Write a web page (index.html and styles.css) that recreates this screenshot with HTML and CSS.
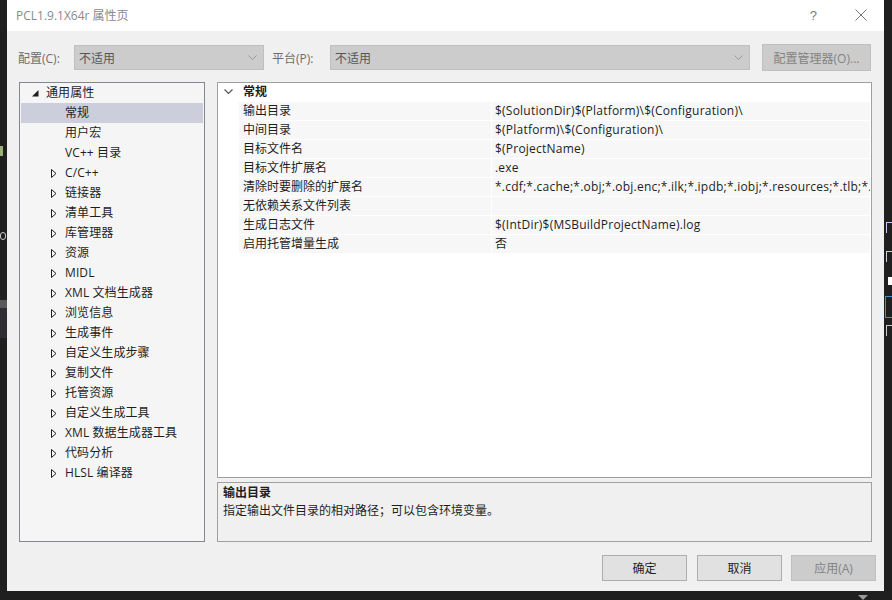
FILE: index.html
```html
<!DOCTYPE html>
<html lang="zh-CN">
<head>
<meta charset="utf-8">
<title>PCL1.9.1X64r 属性页</title>
<link rel="stylesheet" href="styles.css">
</head>
<body>
<div class="backdrop-left">
  <div class="frag-t"></div>
  <div class="frag-a"></div>
  <div class="frag-bar"></div>
  <div class="frag-panel"></div>
</div>
<div class="dialog">
  <div class="titlebar">
    <span class="title">PCL1.9.1X64r 属性页</span>
    <span class="help">?</span>
    <svg class="close" width="12" height="12" viewBox="0 0 12 12"><path d="M0.5 0.5 L11.5 11.5 M11.5 0.5 L0.5 11.5" stroke="#777" stroke-width="1" fill="none"/></svg>
  </div>
  <div class="toolbar">
    <span class="tlabel l1">配置(C):</span>
    <div class="combo c1"><span>不适用</span><svg class="chev" width="9" height="6" viewBox="0 0 9 6"><path d="M0.5 0.5 L4.5 4.5 L8.5 0.5" stroke="#999" fill="none"/></svg></div>
    <span class="tlabel l2">平台(P):</span>
    <div class="combo c2"><span>不适用</span><svg class="chev" width="9" height="6" viewBox="0 0 9 6"><path d="M0.5 0.5 L4.5 4.5 L8.5 0.5" stroke="#999" fill="none"/></svg></div>
    <div class="btn-disabled cfgmgr">配置管理器(O)...</div>
  </div>
  <div class="main">
    <div class="tree">
      <div class="trow lvl0"><span class="twisty"><svg width="7" height="7" viewBox="0 0 7 7"><path d="M6.5 0 L6.5 6.5 L0 6.5 Z" fill="#1e1e1e"/></svg></span><span>通用属性</span></div>
      <div class="trow lvl1 selected"><span class="twisty"></span><span>常规</span></div>
      <div class="trow lvl1"><span class="twisty"></span><span>用户宏</span></div>
      <div class="trow lvl1"><span class="twisty"></span><span>VC++ 目录</span></div>
      <div class="trow lvl1"><span class="twisty"><svg class="tri" width="6" height="9" viewBox="0 0 6 9"><path d="M0.5 0.5 L5 4.5 L0.5 8.5 Z" stroke="#1e1e1e" fill="none"/></svg></span><span>C/C++</span></div>
      <div class="trow lvl1"><span class="twisty"><svg class="tri" width="6" height="9" viewBox="0 0 6 9"><path d="M0.5 0.5 L5 4.5 L0.5 8.5 Z" stroke="#1e1e1e" fill="none"/></svg></span><span>链接器</span></div>
      <div class="trow lvl1"><span class="twisty"><svg class="tri" width="6" height="9" viewBox="0 0 6 9"><path d="M0.5 0.5 L5 4.5 L0.5 8.5 Z" stroke="#1e1e1e" fill="none"/></svg></span><span>清单工具</span></div>
      <div class="trow lvl1"><span class="twisty"><svg class="tri" width="6" height="9" viewBox="0 0 6 9"><path d="M0.5 0.5 L5 4.5 L0.5 8.5 Z" stroke="#1e1e1e" fill="none"/></svg></span><span>库管理器</span></div>
      <div class="trow lvl1"><span class="twisty"><svg class="tri" width="6" height="9" viewBox="0 0 6 9"><path d="M0.5 0.5 L5 4.5 L0.5 8.5 Z" stroke="#1e1e1e" fill="none"/></svg></span><span>资源</span></div>
      <div class="trow lvl1"><span class="twisty"><svg class="tri" width="6" height="9" viewBox="0 0 6 9"><path d="M0.5 0.5 L5 4.5 L0.5 8.5 Z" stroke="#1e1e1e" fill="none"/></svg></span><span>MIDL</span></div>
      <div class="trow lvl1"><span class="twisty"><svg class="tri" width="6" height="9" viewBox="0 0 6 9"><path d="M0.5 0.5 L5 4.5 L0.5 8.5 Z" stroke="#1e1e1e" fill="none"/></svg></span><span>XML 文档生成器</span></div>
      <div class="trow lvl1"><span class="twisty"><svg class="tri" width="6" height="9" viewBox="0 0 6 9"><path d="M0.5 0.5 L5 4.5 L0.5 8.5 Z" stroke="#1e1e1e" fill="none"/></svg></span><span>浏览信息</span></div>
      <div class="trow lvl1"><span class="twisty"><svg class="tri" width="6" height="9" viewBox="0 0 6 9"><path d="M0.5 0.5 L5 4.5 L0.5 8.5 Z" stroke="#1e1e1e" fill="none"/></svg></span><span>生成事件</span></div>
      <div class="trow lvl1"><span class="twisty"><svg class="tri" width="6" height="9" viewBox="0 0 6 9"><path d="M0.5 0.5 L5 4.5 L0.5 8.5 Z" stroke="#1e1e1e" fill="none"/></svg></span><span>自定义生成步骤</span></div>
      <div class="trow lvl1"><span class="twisty"><svg class="tri" width="6" height="9" viewBox="0 0 6 9"><path d="M0.5 0.5 L5 4.5 L0.5 8.5 Z" stroke="#1e1e1e" fill="none"/></svg></span><span>复制文件</span></div>
      <div class="trow lvl1"><span class="twisty"><svg class="tri" width="6" height="9" viewBox="0 0 6 9"><path d="M0.5 0.5 L5 4.5 L0.5 8.5 Z" stroke="#1e1e1e" fill="none"/></svg></span><span>托管资源</span></div>
      <div class="trow lvl1"><span class="twisty"><svg class="tri" width="6" height="9" viewBox="0 0 6 9"><path d="M0.5 0.5 L5 4.5 L0.5 8.5 Z" stroke="#1e1e1e" fill="none"/></svg></span><span>自定义生成工具</span></div>
      <div class="trow lvl1"><span class="twisty"><svg class="tri" width="6" height="9" viewBox="0 0 6 9"><path d="M0.5 0.5 L5 4.5 L0.5 8.5 Z" stroke="#1e1e1e" fill="none"/></svg></span><span>XML 数据生成器工具</span></div>
      <div class="trow lvl1"><span class="twisty"><svg class="tri" width="6" height="9" viewBox="0 0 6 9"><path d="M0.5 0.5 L5 4.5 L0.5 8.5 Z" stroke="#1e1e1e" fill="none"/></svg></span><span>代码分析</span></div>
      <div class="trow lvl1"><span class="twisty"><svg class="tri" width="6" height="9" viewBox="0 0 6 9"><path d="M0.5 0.5 L5 4.5 L0.5 8.5 Z" stroke="#1e1e1e" fill="none"/></svg></span><span>HLSL 编译器</span></div>
    </div>
    <div class="rightcol">
      <div class="grid">
        <div class="gheader"><svg class="gchev" width="9" height="6" viewBox="0 0 9 6"><path d="M0.5 0.5 L4.5 4.5 L8.5 0.5" stroke="#555" stroke-width="1.2" fill="none"/></svg><span class="gcat">常规</span></div>
        <div class="grow"><div class="gname">输出目录</div><div class="gval">$(SolutionDir)$(Platform)\$(Configuration)\</div></div>
        <div class="grow"><div class="gname">中间目录</div><div class="gval">$(Platform)\$(Configuration)\</div></div>
        <div class="grow"><div class="gname">目标文件名</div><div class="gval">$(ProjectName)</div></div>
        <div class="grow"><div class="gname">目标文件扩展名</div><div class="gval">.exe</div></div>
        <div class="grow"><div class="gname">清除时要删除的扩展名</div><div class="gval">*.cdf;*.cache;*.obj;*.obj.enc;*.ilk;*.ipdb;*.iobj;*.resources;*.tlb;*.tli;*.t</div></div>
        <div class="grow"><div class="gname">无依赖关系文件列表</div><div class="gval"></div></div>
        <div class="grow"><div class="gname">生成日志文件</div><div class="gval">$(IntDir)$(MSBuildProjectName).log</div></div>
        <div class="grow"><div class="gname">启用托管增量生成</div><div class="gval">否</div></div>
      </div>
      <div class="desc">
        <div class="dtitle">输出目录</div>
        <div class="dtext">指定输出文件目录的相对路径；可以包含环境变量。</div>
      </div>
    </div>
  </div>
  <div class="buttons">
    <div class="btn">确定</div>
    <div class="btn">取消</div>
    <div class="btn-disabled apply">应用(A)</div>
  </div>
</div>
<div class="backdrop-right">
  <div class="rf rf1"></div>
  <div class="rf rf2"></div>
  <div class="rf-white"></div>
  <div class="rf-box"></div>
  <div class="rf rf3"></div>
</div>
<div class="scroll-arrow"></div>
</body>
</html>
```
FILE: styles.css
```css
html, body {
  margin: 0;
  padding: 0;
}
body {
  width: 892px;
  height: 600px;
  overflow: hidden;
  background: #1f1f1f;
  font-family: "Open Sans", "Noto Sans CJK SC", sans-serif;
  font-size: 12px;
  color: #1e1e1e;
  position: relative;
}

/* backdrop fragments (other windows behind the dialog) */
.backdrop-left {
  position: absolute;
  left: 0;
  top: 0;
  width: 7px;
  height: 600px;
  overflow: hidden;
}
.frag-t {
  position: absolute;
  left: 0;
  top: 146px;
  width: 3px;
  height: 10px;
  background: #9cb07a;
}
.frag-a {
  position: absolute;
  left: 0;
  top: 232px;
  width: 6px;
  height: 8px;
  border: 1px solid #c9c9c9;
  border-radius: 3px;
  box-sizing: border-box;
}
.frag-bar {
  position: absolute;
  left: 0;
  top: 300px;
  width: 7px;
  height: 8px;
  background: #5a5a5a;
}
.frag-panel {
  position: absolute;
  left: 0;
  top: 308px;
  width: 7px;
  height: 30px;
  background: #2d2d33;
}
.backdrop-right {
  position: absolute;
  left: 884px;
  top: 0;
  width: 8px;
  height: 600px;
  overflow: hidden;
}
.rf {
  position: absolute;
  left: 2px;
  width: 6px;
  height: 10px;
  border-left: 1px solid #c8ccf0;
  border-top: 1px solid #c8ccf0;
}
.rf1 { top: 222px; }
.rf2 { top: 251px; }
.rf3 { top: 325px; border-color: #cccccc; }
.rf-white {
  position: absolute;
  left: 4px;
  top: 277px;
  width: 4px;
  height: 8px;
  background: #fff;
}
.rf-box {
  position: absolute;
  left: 1px;
  top: 296px;
  width: 8px;
  height: 22px;
  border: 1px solid #3c8fe0;
  box-sizing: border-box;
}
.scroll-arrow {
  position: absolute;
  left: 858px;
  top: 595px;
  width: 0;
  height: 0;
  border-left: 5px solid transparent;
  border-right: 5px solid transparent;
  border-top: 5px solid #9a9a9a;
}

/* dialog */
.dialog {
  margin-left: 7px;
  width: 877px;
  height: 591px;
  background: #f0f0f0;
  display: flex;
  flex-direction: column;
}
.titlebar {
  height: 31px;
  box-sizing: border-box;
  padding-bottom: 1px;
  background: #ffffff;
  display: flex;
  align-items: center;
  padding-left: 9px;
  flex-shrink: 0;
}
.title {
  color: #8a8a8a;
  font-size: 12px;
  flex: 1;
}
.help {
  color: #7a7a7a;
  font-size: 13px;
  margin-right: 38px;
  font-family: "Liberation Sans", sans-serif;
}
.close {
  margin-right: 17px;
}

.toolbar {
  margin-top: 13px;
  height: 27px;
  display: flex;
  align-items: center;
  padding-left: 11px;
  flex-shrink: 0;
}
.tlabel {
  color: #6d6d6d;
  flex-shrink: 0;
}
.l1 { width: 56px; }
.l2 { width: 58px; margin-left: 8px; }
.combo {
  height: 25px;
  box-sizing: border-box;
  background: #cccccc;
  border: 1px solid #bfbfbf;
  display: flex;
  align-items: center;
  padding-left: 4px;
  padding-right: 6px;
  color: #555555;
  flex-shrink: 0;
}
.combo span { flex: 1; }
.c1 { width: 190px; }
.c2 { width: 420px; }
.btn-disabled {
  box-sizing: border-box;
  background: #cccccc;
  border: 1px solid #bfbfbf;
  color: #838383;
  display: flex;
  align-items: center;
  justify-content: center;
  flex-shrink: 0;
}
.cfgmgr {
  margin-left: 12px;
  width: 109px;
  height: 27px;
}

.main {
  margin-top: 11px;
  height: 460px;
  display: flex;
  gap: 12px;
  padding: 0 12px;
  flex-shrink: 0;
}
.tree {
  width: 186px;
  flex-shrink: 0;
  box-sizing: border-box;
  border: 1px solid #828790;
  background: #f5f5f5;
  padding: 0 1px;
}
.trow {
  height: 20px;
  box-sizing: border-box;
  padding-bottom: 2px;
  display: flex;
  align-items: center;
  white-space: nowrap;
  letter-spacing: 0.1px;
}
.trow .twisty { margin-top: 2px; }
.trow.lvl0 { padding-left: 9px; }
.trow.lvl1 { padding-left: 28px; }
.twisty {
  width: 16px;
  display: flex;
  align-items: center;
  padding-left: 2px;
  box-sizing: border-box;
}
.trow.selected {
  background: #cccedb;
}

.rightcol {
  flex: 1;
  min-width: 0;
  display: flex;
  flex-direction: column;
  gap: 4px;
}
.grid {
  height: 396px;
  box-sizing: border-box;
  border: 1px solid #a0a0a0;
  background: #ffffff;
  overflow: hidden;
}
.gheader {
  height: 18px;
  box-sizing: border-box;
  padding-bottom: 2px;
  display: flex;
  align-items: center;
  padding-left: 6px;
  margin-bottom: 1px;
}
.gchev { margin-right: 10px; margin-top: 2px; }
.gcat { font-weight: bold; }
.grow {
  height: 18px;
  margin-bottom: 1px;
  margin-left: 21px;
  display: flex;
  gap: 1px;
}
.gname, .gval {
  background: #f7f7f7;
  display: flex;
  align-items: center;
  white-space: nowrap;
  overflow: hidden;
  box-sizing: border-box;
  padding-bottom: 2px;
}
.gname {
  width: 252px;
  padding-left: 4px;
  flex-shrink: 0;
}
.gval {
  flex: 1;
  min-width: 0;
  padding-left: 3px;
  margin-right: 1px;
  letter-spacing: 0.22px;
}
.desc {
  height: 60px;
  box-sizing: border-box;
  border: 1px solid #a0a0a0;
  background: #f0f0f0;
  padding: 1px 5px;
}
.dtitle {
  font-weight: bold;
  line-height: 18px;
}
.dtext {
  line-height: 18px;
}

.buttons {
  margin-top: 13px;
  display: flex;
  justify-content: flex-end;
  padding-right: 8px;
  gap: 10px;
}
.btn {
  width: 85px;
  height: 26px;
  box-sizing: border-box;
  background: #e1e1e1;
  border: 1px solid #adadad;
  display: flex;
  align-items: center;
  justify-content: center;
}
.apply {
  width: 85px;
  height: 26px;
  margin-left: -1px;
}
```
